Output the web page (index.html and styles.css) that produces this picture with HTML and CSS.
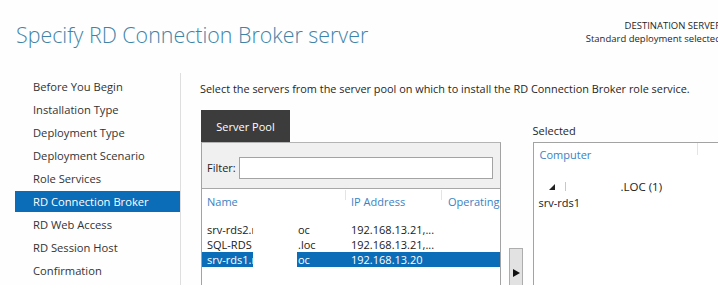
FILE: index.html
```html
<!DOCTYPE html>
<html>
<head>
<meta charset="utf-8">
<link rel="stylesheet" href="styles.css">
</head>
<body>
<div class="page">
  <header class="top">
    <h1 class="title">Specify RD Connection Broker server</h1>
    <div class="dest">
      <div>DESTINATION SERVER</div>
      <div>Standard deployment selected</div>
    </div>
  </header>
  <div class="main">
    <nav class="side">
      <div class="step">Before You Begin</div>
      <div class="step">Installation Type</div>
      <div class="step">Deployment Type</div>
      <div class="step">Deployment Scenario</div>
      <div class="step">Role Services</div>
      <div class="step active">RD Connection Broker</div>
      <div class="step">RD Web Access</div>
      <div class="step">RD Session Host</div>
      <div class="step">Confirmation</div>
    </nav>
    <section class="content">
      <p class="desc">Select the servers from the server pool on which to install the RD Connection Broker role service.</p>
      <div class="pick">
        <div class="pool">
          <div class="tab">Server Pool</div>
          <div class="poolbox">
            <div class="filter">
              <span class="flabel">Filter:</span>
              <div class="finput"></div>
            </div>
            <div class="list">
              <div class="lhead">
                <div class="hc c1">Name</div>
                <div class="hc c2">IP Address</div>
                <div class="hc c3">Operating</div>
              </div>
              <div class="row">
                <div class="c1 namecell"><span class="n1">srv-rds2.r</span><span class="gap"></span><span class="n2">oc</span></div>
                <div class="c2">192.168.13.21,...</div>
                <div class="c3"></div>
              </div>
              <div class="row">
                <div class="c1 namecell"><span class="n1">SQL-RDS</span><span class="gap"></span><span class="n2">.loc</span></div>
                <div class="c2">192.168.13.21,...</div>
                <div class="c3"></div>
              </div>
              <div class="row selrow">
                <div class="c1 namecell"><span class="n1">srv-rds1.r</span><span class="gap"></span><span class="n2">oc</span></div>
                <div class="c2">192.168.13.20</div>
                <div class="c3"></div>
              </div>
            </div>
          </div>
        </div>
        <div class="mover">
          <div class="btn"><span class="tri"></span></div>
        </div>
        <div class="sel">
          <div class="sellabel">Selected</div>
          <div class="selbox">
            <div class="shead"><span class="shc">Computer</span></div>
            <div class="tree">
              <span class="expand"></span><span class="bar"></span><span class="dom">.LOC (1)</span>
            </div>
            <div class="leaf">srv-rds1</div>
          </div>
        </div>
      </div>
    </section>
  </div>
</div>
</body>
</html>
```
FILE: styles.css
```css
html, body {
  margin: 0;
  padding: 0;
  overflow: hidden;
  background: #fefefe;
}
body {
  font-family: "Open Sans", "Noto Sans", sans-serif;
  font-size: 11px;
  color: #262626;
}
.page {
  width: 718px;
  height: 285px;
  overflow: hidden;
}
.top {
  height: 73px;
  display: flex;
  justify-content: space-between;
  align-items: flex-start;
}
.title {
  margin: 20px 0 0 16px;
  font-weight: 300;
  font-size: 21.4px;
  line-height: 30px;
  color: #3d84a8;
  white-space: nowrap;
}
.dest {
  margin: 19px -3px 0 0;
  text-align: right;
  font-size: 9.5px;
  line-height: 13px;
  color: #1e1e1e;
  white-space: nowrap;
}
.main {
  display: flex;
  height: 212px;
}
.side {
  flex: 0 0 165px;
  margin-left: 15px;
  padding-top: 3px;
  border-right: 1px solid #dedede;
}
.step {
  height: 21px;
  line-height: 21px;
  margin-bottom: 2px;
  padding-left: 18px;
  color: #333;
  font-size: 11.2px;
  white-space: nowrap;
}
.step.active {
  background: #0b6cb8;
  color: #fff;
}
.content {
  flex: 1;
  min-width: 0;
  padding: 8px 0 0 19px;
}
.desc {
  margin: 0;
  line-height: 16px;
  font-size: 10.9px;
  color: #1e1e1e;
  white-space: nowrap;
}
.pick {
  display: flex;
  margin-top: 13px;
  margin-left: 1px;
}
.pool {
  flex: 0 0 295px;
}
.tab {
  width: 89px;
  height: 32px;
  background: #3c3c3c;
  color: #fff;
  text-align: center;
  line-height: 34px;
  font-size: 11px;
}
.poolbox {
  border-left: 1px solid #a3a3a3;
  border-right: 1px solid #a3a3a3;
  border-top: 1px solid #b4b4b4;
  height: 200px;
}
.filter {
  height: 46px;
  background: #f0f0f0;
  border-bottom: 1px solid #a8a8a8;
  display: flex;
  align-items: center;
  padding-left: 5px;
  padding-top: 4px;
  box-sizing: border-box;
}
.flabel {
  font-size: 11px;
  color: #1e1e1e;
  margin-right: 3px;
}
.finput {
  width: 252px;
  height: 20px;
  background: #fff;
  border: 1px solid #a3a3a3;
}
.list {
  background: #fff;
  height: 150px;
}
.lhead {
  display: flex;
  height: 27px;
  margin-bottom: 6px;
}
.hc {
  color: #3b82c2;
  line-height: 26px;
  font-size: 11px;
}
.c1 { flex: 0 0 143px; box-sizing: border-box; padding-left: 5px; }
.c2 { flex: 0 0 96px; box-sizing: border-box; padding-left: 6px; }
.c3 { flex: 1; min-width: 0; box-sizing: border-box; padding-left: 7px; }
.lhead .c2, .lhead .c3 {
  position: relative;
  white-space: nowrap;
  overflow: hidden;
}
.lhead .c2::before, .lhead .c3::before {
  content: "";
  position: absolute;
  left: 0;
  top: 1px;
  height: 10px;
  border-left: 1px solid #e4e4e4;
}
.row {
  display: flex;
  height: 15px;
  line-height: 15px;
  font-size: 11px;
  color: #1a1a1a;
  white-space: nowrap;
}
.namecell {
  display: flex;
  padding-left: 0;
}
.n1 {
  flex: 0 0 51px;
  padding-left: 5px;
  box-sizing: border-box;
  overflow: hidden;
}
.gap {
  flex: 0 0 44px;
  background: #fff;
}
.n2 {
  flex: 1;
  padding-left: 1px;
}
.c2, .c3 { overflow: hidden; }
.selrow {
  background: #0b6cb8;
  color: #fff;
}
.mover {
  flex: 0 0 14px;
  margin-left: 8px;
  padding-top: 138px;
}
.btn {
  height: 60px;
  background: #e2e2e2;
  border: 1px solid #adadad;
  box-sizing: border-box;
  position: relative;
}
.tri {
  position: absolute;
  left: 3px;
  top: 20px;
  width: 0;
  height: 0;
  border-top: 4px solid transparent;
  border-bottom: 4px solid transparent;
  border-left: 7px solid #111;
}
.sel {
  margin-left: 10px;
  flex: 0 0 200px;
}
.sellabel {
  padding-top: 13px;
  line-height: 16px;
  margin-bottom: 3px;
  font-size: 11px;
  color: #1e1e1e;
}
.selbox {
  border: 1px solid #a3a3a3;
  border-right: none;
  height: 200px;
  background: #fff;
}
.shead {
  height: 25px;
  position: relative;
  padding-left: 6px;
  line-height: 24px;
}
.shead::after {
  content: "";
  position: absolute;
  left: 163px;
  top: 0;
  height: 12px;
  border-left: 1px solid #e4e4e4;
}
.shc {
  color: #3b82c2;
  font-size: 11px;
}
.tree {
  display: flex;
  align-items: center;
  height: 18px;
  margin-top: 9px;
  padding-left: 15px;
  font-size: 11px;
}
.expand {
  width: 0;
  height: 0;
  border-left: 6px solid transparent;
  border-bottom: 6px solid #222;
  margin-right: 10px;
  margin-top: 2px;
}
.bar {
  width: 1px;
  height: 9px;
  background: #c8c8c8;
  margin-right: 55px;
}
.dom {
  color: #1a1a1a;
  font-size: 11.5px;
}
.leaf {
  padding-left: 5px;
  line-height: 16px;
  font-size: 11px;
  color: #1a1a1a;
}
```
